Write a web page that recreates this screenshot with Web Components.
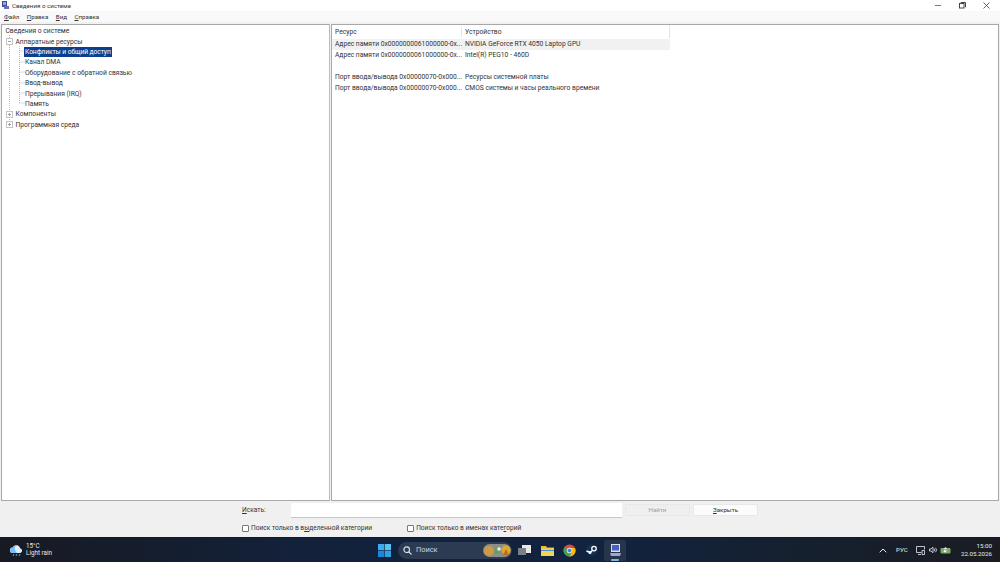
<!DOCTYPE html>
<html lang="ru">
<head>
<meta charset="utf-8">
<title>Сведения о системе</title>
<style>
  html, body { margin: 0; padding: 0; width: 1000px; height: 562px; overflow: hidden; background: #f0f0f0; }
  body { font: 6.7px/10px Roboto, "Noto Sans", sans-serif; color: #333; }
  sys-app { width: 1000px; height: 562px; }
</style>
</head>
<body>
<sys-app>
  <title-bar slot="title">Сведения о системе</title-bar>
  <menu-bar slot="menu">
    <span><u>Ф</u>айл</span><span><u>П</u>равка</span><span><u>В</u>ид</span><span><u>С</u>правка</span>
  </menu-bar>
  <tree-pane slot="left">
    <tree-row level="0">Сведения о системе</tree-row>
    <tree-row level="1" toggle="minus">Аппаратные ресурсы</tree-row>
    <tree-row level="2" selected>Конфликты и общий доступ</tree-row>
    <tree-row level="2">Канал DMA</tree-row>
    <tree-row level="2">Оборудование с обратной связью</tree-row>
    <tree-row level="2">Ввод-вывод</tree-row>
    <tree-row level="2">Прерывания (IRQ)</tree-row>
    <tree-row level="2">Память</tree-row>
    <tree-row level="1" toggle="plus">Компоненты</tree-row>
    <tree-row level="1" toggle="plus">Программная среда</tree-row>
  </tree-pane>
  <list-pane slot="right">
    <list-row head><span>Ресурс</span><span>Устройство</span></list-row>
    <list-row hot><span>Адрес памяти 0x0000000061000000-0x...</span><span>NVIDIA GeForce RTX 4050 Laptop GPU</span></list-row>
    <list-row><span>Адрес памяти 0x0000000061000000-0x...</span><span>Intel(R) PEG10 - 460D</span></list-row>
    <list-row blank></list-row>
    <list-row><span>Порт ввода/вывода 0x00000070-0x000...</span><span>Ресурсы системной платы</span></list-row>
    <list-row><span>Порт ввода/вывода 0x00000070-0x000...</span><span>CMOS системы и часы реального времени</span></list-row>
  </list-pane>
  <search-bar slot="search"></search-bar>
  <task-bar slot="task"></task-bar>
</sys-app>

<script>
// small helper, every element is just a shadow root with a style and some markup
function shadow(el, css, html) {
  el.attachShadow({ mode: 'open' }).innerHTML = `<style>${css}</style>${html}`
}

class SysApp extends HTMLElement {
  constructor() {
    super()
    shadow(this, `
      :host { display: flex; flex-direction: column; }
      .panes { height: 477px; margin-top: 1px; display: flex; gap: 1px; padding: 0 1px; }
      ::slotted([slot=left]) { width: 329px; }
      ::slotted([slot=right]) { flex: 1; }
    `, `
      <slot name="title"></slot>
      <slot name="menu"></slot>
      <div class="panes"><slot name="left"></slot><slot name="right"></slot></div>
      <slot name="search"></slot>
      <slot name="task"></slot>
    `)
  }
}

class TitleBar extends HTMLElement {
  constructor() {
    super()
    shadow(this, `
      :host { display: flex; align-items: center; height: 11px; background: #fff; color: #333; position: relative; font-size: 6.2px; }
      svg.app { margin: 0 3px 0 2px; }
      .text { flex: 1; }
      .btns { display: flex; padding-right: 2px; }
      .btn { width: 24px; height: 11px; display: flex; align-items: center; justify-content: center; }
    `, `
      <svg class="app" width="7" height="9" viewBox="0 0 7 9">
        <rect x="0" y="0" width="5" height="6" fill="#3d4c9c"/><rect x="1" y="1" width="3" height="3" fill="#8fa4e4"/>
        <rect x="2" y="5" width="5" height="3" fill="#6a6fb5"/>
      </svg>
      <span class="text"><slot></slot></span>
      <div class="btns">
        <div class="btn"><svg width="7" height="7" viewBox="0 0 7 7"><path d="M0 3.5h6" stroke="#777" stroke-width="1"/></svg></div>
        <div class="btn"><svg width="7" height="7" viewBox="0 0 7 7" fill="none" stroke="#444"><rect x=".5" y="1.5" width="4.5" height="4.5"/><path d="M2 1V.5h4.5V5H6"/></svg></div>
        <div class="btn"><svg width="7" height="7" viewBox="0 0 7 7"><path d="M.5.5l6 6M6.5.5l-6 6" stroke="#555" stroke-width=".9"/></svg></div>
      </div>
    `)
  }
}

class MenuBar extends HTMLElement {
  constructor() {
    super()
    shadow(this, `
      :host { display: flex; gap: 7.5px; height: 12px; align-items: center; background: #f9f9f9; padding-left: 4px; box-sizing: border-box; border-bottom: 1px solid #f0f0f0; font-size: 6.2px; }
    `, `<slot></slot>`)
  }
}

class TreePane extends HTMLElement {
  constructor() {
    super()
    shadow(this, `
      :host { display: block; position: relative; background: #fff; border: 1px solid #a8a8a8; border-right-color: #bdbdbd; box-sizing: border-box; padding-top: 1px; }
      svg.guides { position: absolute; left: 0; top: 0; pointer-events: none; }
    `, `
      <svg class="guides" width="30" height="110" fill="none" stroke="#b8b8b8" stroke-dasharray="1 1">
        <path d="M7.5 10V99M17.5 21V78M17.500 26H23M17.500 37H23M17.500 47H23M17.500 58H23M17.500 68H23M17.500 78H23"/>
      </svg>
      <slot></slot>
    `)
  }
}

class TreeRow extends HTMLElement {
  constructor() {
    super()
    const level = +this.getAttribute('level')
    const toggle = this.getAttribute('toggle')
    const bar = toggle === 'plus' ? '<path d="M2 3.500h3M3.500 2v3"/>' : '<path d="M2 3.500h3"/>'
    shadow(this, `
      :host { display: flex; align-items: center; height: 10.4px; position: relative; padding-left: ${[3.5, 13.5, 23][level]}px; }
      .box { position: absolute; left: 4px; top: 1.500px; background: #fff; }
      .label { line-height: 10px; white-space: nowrap; }
      :host([selected]) .label { background: #0a3f8f; color: #fff; padding: 0 1px; margin-left: -1px; letter-spacing: -.08px; }
    `, `
      ${toggle ? `<svg class="box" width="7" height="7" viewBox="0 0 7 7" fill="none" stroke="#a0a0a0"><rect x=".5" y=".5" width="6" height="6" stroke="#c4c4c4"/>${bar}</svg>` : ''}
      <span class="label"><slot></slot></span>
    `)
  }
}

class ListPane extends HTMLElement {
  constructor() {
    super()
    shadow(this, `
      :host { display: block; background: #fff; border: 1px solid #a8a8a8; box-sizing: border-box; }
      .table { width: 338px; }
    `, `<div class="table"><slot></slot></div>`)
  }
}

class ListRow extends HTMLElement {
  constructor() {
    super()
    shadow(this, `
      :host { display: block; height: 10.7px; }
      :host([head]) { height: 13px; margin-bottom: 1px; }
      :host([blank]) { height: 11.7px; }
      :host([hot]) { background: #f1f1f1; }
      .cells { display: grid; grid-template-columns: 130px 1fr; height: 100%; align-items: center; }
      ::slotted(span) { padding-left: 3px; white-space: nowrap; overflow: hidden; }
      :host([head]) .cells { border-right: 1px solid #e5e5e5; }
      :host([head]) ::slotted(span:first-child) { border-right: 1px solid #e5e5e5; }
    `, `<div class="cells"><slot></slot></div>`)
  }
}

class SearchBar extends HTMLElement {
  constructor() {
    super()
    shadow(this, `
      :host { display: block; height: 36px; background: #f0f0f0; padding-left: 242px; box-sizing: border-box; font-size: 6.6px; }
      .top { display: flex; align-items: center; height: 18px; box-sizing: border-box; }
      .lbl { width: 49px; margin-top: -1px; }
      .field { width: 331px; height: 15px; background: #fff; border-bottom: 1px solid #c8c8c8; box-sizing: border-box; }
      .btn { width: 65px; height: 12px; margin-left: 3px; display: flex; align-items: center; justify-content: center; background: #fbfbfb; border: 1px solid #e8e8e8; box-sizing: border-box; border-radius: 1px; font-size: 6.2px; }
      .btn.off { background: #efefef; color: #a0a0a0; }
      .checks { display: flex; align-items: center; height: 18px; }
      .check { display: flex; align-items: center; gap: 2px; }
      .check + .check { margin-left: 35px; }
      .box { width: 5px; height: 5px; background: #fff; border: 1px solid #777; border-radius: 1px; }
    `, `
      <div class="top">
        <span class="lbl"><u>И</u>скать:</span>
        <div class="field"></div>
        <div class="btn off">Найти</div>
        <div class="btn"><span><u>З</u>акрыть</span></div>
      </div>
      <div class="checks">
        <div class="check"><div class="box"></div><span>Поиск только в в<u>ы</u>деленной категории</span></div>
        <div class="check"><div class="box"></div><span>Поиск только в именах кате<u>г</u>орий</span></div>
      </div>
    `)
  }
}

class TaskBar extends HTMLElement {
  constructor() {
    super()
    shadow(this, `
      :host { display: flex; align-items: center; height: 25px; color: #e8ecf2; background: linear-gradient(90deg, #171a22 0%, #13213a 30%, #12233f 60%, #15202f 80%, #1a1c22 100%); border-top: 1px solid #0d1a30; box-sizing: border-box; position: relative; }
      .weather { display: flex; align-items: center; gap: 2px; margin-left: 9px; line-height: 7.4px; width: 369px; font-size: 6.3px; }
      .weather div { display: flex; flex-direction: column; }
      .apps { display: flex; align-items: center; height: 100%; flex: 1; }
      .win { width: 13px; height: 13px; margin-right: 7px; }
      .pill { display: flex; align-items: center; gap: 4px; width: 114px; height: 17px; padding-left: 5px; box-sizing: border-box; border-radius: 9px; background: #2c3a52; position: relative; color: #cfd6e0; font-size: 7.4px; }
      .pill .art { position: absolute; right: 1px; top: 2px; }
      .ico { width: 22.7px; display: flex; justify-content: center; align-items: center; height: 100%; position: relative; }
      .first { margin-left: 1px; }
      .on { background: #26344c; border-radius: 2px; height: 21px; }
      .on::after { content: ""; position: absolute; bottom: 0; left: 7px; width: 8px; height: 1.500px; background: #7fb6ea; border-radius: 1px; }
      .tray { display: flex; align-items: center; width: 127px; height: 100%; position: relative; }
      .chev { margin-left: 6px; }
      .lang { margin-left: 9px; width: 20px; font-size: 6.2px; }
      .tic { display: flex; margin-right: 3.5px; }
      .clock { position: absolute; right: 8px; top: 3.500px; text-align: right; line-height: 8.500px; font-size: 6.2px; }
    `, `
      <div class="weather">
        <svg width="15" height="13" viewBox="0 0 15 13"><path d="M3.500 9a2.700 2.700 0 0 1 .2-5.400A3.800 3.800 0 0 1 11 4.300 2.400 2.400 0 0 1 11.300 9z" fill="#dfeefc"/><path d="M3.500 9a2.700 2.700 0 0 1 .2-5.400A3.800 3.800 0 0 1 7 1.500C5 4 6 7 8 9z" fill="#7fbbf0"/><path d="M5 10l-1 2M8 10l-1 2M11 10l-1 2" stroke="#4ea3ec" stroke-width="1"/></svg>
        <div><span>15°C</span><span>Light rain</span></div>
      </div>
      <div class="apps">
        <svg class="win" viewBox="0 0 13 13">
          <rect width="6.200" height="6.200" fill="#3fa9ee"/><rect x="6.800" width="6.200" height="6.200" fill="#54c0f5"/>
          <rect y="6.800" width="6.200" height="6.200" fill="#1c86d8"/><rect x="6.800" y="6.800" width="6.200" height="6.200" fill="#2f9fe8"/>
        </svg>
        <div class="pill">
          <svg width="9" height="9" viewBox="0 0 9 9" fill="none" stroke="#dfe6ee" stroke-width="1.100"><circle cx="3.700" cy="3.700" r="2.800"/><path d="M5.800 5.800L8.500 8.500"/></svg>
          <span>Поиск</span>
          <svg class="art" width="28" height="13" viewBox="0 0 28 13">
            <rect width="28" height="13" rx="6.500" fill="#8c8f86"/>
            <circle cx="6" cy="7" r="5" fill="#d09a45"/><circle cx="23" cy="6" r="4.500" fill="#e0a92e"/>
            <circle cx="14" cy="7" r="3" fill="#5fa06f"/><circle cx="16" cy="5" r="1.800" fill="#e8eef0"/><path d="M20 11l3-6 3 6z" fill="#b96f2a"/>
          </svg>
        </div>
        <div class="ico first"><svg width="13" height="11" viewBox="0 0 13 11"><rect x="4" y="0" width="9" height="8" fill="#e8e8e8"/><rect x="0" y="3" width="8" height="7" fill="#7b7f86"/></svg></div>
        <div class="ico"><svg width="13" height="11" viewBox="0 0 13 11"><path d="M0 1h5l1 1.500h7V5H0z" fill="#f1b92f"/><rect y="3.500" width="13" height="7.500" fill="#f7d154"/><rect y="5" width="13" height="1" fill="#3b8fd6"/></svg></div>
        <div class="ico"><svg width="13" height="13" viewBox="0 0 26 26"><circle cx="13" cy="13" r="12" fill="#e8453c"/><path d="M13 13L2.600 19A12 12 0 0 1 3 6.500z" fill="#34a853"/><path d="M24 8H13l-5 8.500L13 25a12 12 0 0 0 11-17z" fill="#fbbc05"/><path d="M8 16.500L3 19a12 12 0 0 0 10 6l5-8.700z" fill="#34a853"/><circle cx="13" cy="13" r="5.400" fill="#fff"/><circle cx="13" cy="13" r="4.200" fill="#4285f4"/></svg></div>
        <div class="ico"><svg width="12" height="12" viewBox="0 0 24 24"><circle cx="12" cy="12" r="11.500" fill="#16304f"/><path d="M1 14l7 3 6-5" stroke="#fff" stroke-width="3" fill="none"/><circle cx="16" cy="9" r="4.500" fill="none" stroke="#fff" stroke-width="2.500"/><circle cx="8" cy="17" r="3" fill="#fff"/></svg></div>
        <div class="ico on"><svg width="11" height="13" viewBox="0 0 11 13"><rect x="1" y="0" width="9" height="8" fill="#d7dcf0"/><rect x="2" y="1" width="7" height="5.500" fill="#4a5fc1"/><path d="M0 9h11l-1 3H1z" fill="#9fa7cf"/></svg></div>
      </div>
      <div class="tray">
        <svg class="chev" width="8" height="5" viewBox="0 0 8 5" fill="none" stroke="#e8ecf2"><path d="M.7 4.300L4 1l3.300 3.300"/></svg>
        <span class="lang">РУС</span>
        <div class="tic"><svg width="9" height="9" viewBox="0 0 9 9" fill="none" stroke="#e8ecf2" stroke-width=".8"><path d="M5.500 6.500H.5V.5h8v3"/><path d="M6 4.500h2.500V8.500H6zM2 8.500h3"/></svg></div>
        <div class="tic"><svg width="8" height="8" viewBox="0 0 8 8" fill="none" stroke="#e8ecf2" stroke-width=".8"><path d="M.5 3v2h1.500L4 6.800V1.200L2 3z"/><path d="M5.300 2.800a2 2 0 0 1 0 2.400M6.600 1.800a3.500 3.500 0 0 1 0 4.400"/></svg></div>
        <div class="tic"><svg width="11" height="8" viewBox="0 0 11 8"><rect x=".5" y="2" width="10" height="5.500" rx="1" fill="#7ea86e"/><path d="M5.500 1l-2 2h4z" fill="#dfe9d8"/><path d="M5 3l-1.500 3H5l-.5 1.500L7 4.500H5.500z" fill="#fff"/></svg></div>
        <div class="clock">15:00<br>22.05.2026</div>
      </div>
    `)
  }
}

customElements.define('sys-app', SysApp)
customElements.define('title-bar', TitleBar)
customElements.define('menu-bar', MenuBar)
customElements.define('tree-pane', TreePane)
customElements.define('tree-row', TreeRow)
customElements.define('list-pane', ListPane)
customElements.define('list-row', ListRow)
customElements.define('search-bar', SearchBar)
customElements.define('task-bar', TaskBar)
</script>
</body>
</html>
